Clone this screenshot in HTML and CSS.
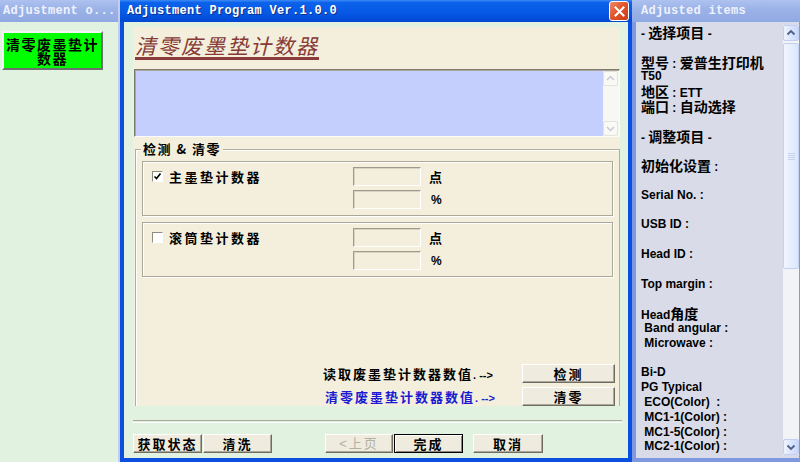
FILE: index.html
```html
<!DOCTYPE html>
<html lang="zh-CN">

<head>
    <meta charset="UTF-8">
    <title>Adjustment Program Ver.1.0.0</title>
    <link rel="stylesheet" href="styles.css">
</head>

<body>
    <div class="left-win">
        <div class="caption caption-off">Adjustment o...</div>
        <div class="left-body">
            <button class="menu-btn">清零废墨垫计数器</button>
        </div>
    </div>

    <div class="main-win">
        <div class="caption caption-on">
            <span class="caption-text">Adjustment Program Ver.1.0.0</span>
            <button class="close-btn">
                <svg width="17" height="17" viewBox="0 0 17 17">
                    <path d="M4.5 4.5 L12.5 12.5 M12.5 4.5 L4.5 12.5" stroke="#fff" stroke-width="2" stroke-linecap="square" fill="none" />
                </svg>
            </button>
        </div>
        <div class="main-body">
            <div class="panel">
                <div class="heading"><span>清零废墨垫计数器</span></div>
                <div class="memo">
                    <div class="memo-text"></div>
                    <div class="memo-scroll">
                        <span class="arrow-box"><svg width="13" height="13" viewBox="0 0 13 13"><polyline points="3,8 6.5,4.5 10,8" stroke="#c9cbd2" stroke-width="1.5" fill="none" /></svg></span>
                        <span class="arrow-box"><svg width="13" height="13" viewBox="0 0 13 13"><polyline points="3,5 6.5,8.5 10,5" stroke="#c9cbd2" stroke-width="1.5" fill="none" /></svg></span>
                    </div>
                </div>

                <div class="group">
                    <div class="group-title">检测 &amp; 清零</div>

                    <div class="counter-box">
                        <label class="check">
                            <span class="check-box"><svg width="9" height="9" viewBox="0 0 9 9"><polyline points="1.5,4.5 3.5,6.5 7.5,1.5" stroke="#000" stroke-width="1.6" fill="none" /></svg></span>
                            主墨垫计数器
                        </label>
                        <span class="field"></span><span class="unit">点</span>
                        <span class="field field-2"></span><span class="unit unit-2">%</span>
                    </div>

                    <div class="counter-box second">
                        <label class="check">
                            <span class="check-box"></span>
                            滚筒垫计数器
                        </label>
                        <span class="field"></span><span class="unit">点</span>
                        <span class="field field-2"></span><span class="unit unit-2">%</span>
                    </div>

                    <div class="actions">
                        <span class="hint">读取废墨垫计数器数值<span class="arrow-txt">. --&gt;</span></span>
                        <button class="btn">检测</button>
                        <span class="hint hint-blue">清零废墨垫计数器数值<span class="arrow-txt">. --&gt;</span></span>
                        <button class="btn">清零</button>
                    </div>
                </div>
            </div>

            <div class="separator"></div>

            <div class="footer">
                <button class="btn foot-btn">获取状态</button>
                <button class="btn foot-btn">清洗</button>
                <button class="btn foot-btn disabled prev">&lt;上页</button>
                <button class="btn foot-btn default">完成</button>
                <button class="btn foot-btn cancel">取消</button>
            </div>
        </div>
    </div>

    <div class="right-win">
        <div class="caption caption-off">Adjusted items</div>
        <div class="right-body">
            <div class="items">
                <div>- <span class="cn">选择项目</span> -</div>
                <div class="sp"><span class="cn">型号</span> : <span class="cn">爱普生打印机</span></div>
                <div>T50</div>
                <div><span class="cn">地区</span> : ETT</div>
                <div><span class="cn">端口</span> : <span class="cn">自动选择</span></div>
                <div class="sp">- <span class="cn">调整项目</span> -</div>
                <div class="sp"><span class="cn">初始化设置</span> :</div>
                <div class="sp">Serial No. :</div>
                <div class="sp">USB ID :</div>
                <div class="sp">Head ID :</div>
                <div class="sp">Top margin :</div>
                <div class="sp">Head<span class="cn">角度</span></div>
                <div> Band angular :</div>
                <div> Microwave :</div>
                <div class="sp">Bi-D</div>
                <div>PG Typical</div>
                <div> ECO(Color)  :</div>
                <div> MC1-1(Color) :</div>
                <div> MC1-5(Color) :</div>
                <div> MC2-1(Color) :</div>
            </div>
            <div class="vscroll">
                <span class="sc-arrow"><svg width="14" height="14" viewBox="0 0 14 14"><polyline points="3.5,8.5 7,5 10.5,8.5" stroke="#4d6185" stroke-width="1.8" fill="none" /></svg></span>
                <span class="sc-thumb"><span class="grip"></span></span>
                <span class="sc-track"></span>
                <span class="sc-arrow"><svg width="14" height="14" viewBox="0 0 14 14"><polyline points="3.5,5.5 7,9 10.5,5.5" stroke="#4d6185" stroke-width="1.8" fill="none" /></svg></span>
            </div>
        </div>
    </div>
</body>

</html>
```

FILE: styles.css
```css
body {
    margin: 0;
    width: 800px;
    height: 462px;
    overflow: hidden;
    display: flex;
    font-family: "Liberation Sans", "Noto Sans CJK SC", sans-serif;
    font-size: 12px;
    color: #000;
    background-color: #e1f2e1;
}

button {
    font-family: inherit;
    cursor: default;
}

/* title bars */
.caption {
    height: 22px;
    box-sizing: border-box;
    display: flex;
    align-items: center;
    font-family: "Liberation Mono", monospace;
    font-weight: bold;
    font-size: 12px;
    letter-spacing: 0.3px;
    white-space: nowrap;
    overflow: hidden;
}

.caption-off {
    background: linear-gradient(to bottom, #aec2f0 0%, #9cb3e8 40%, #91a9e2 100%);
    color: #eef2fc;
}

.caption-on {
    background: linear-gradient(to bottom, #3d8af7 0%, #0b62ea 12%, #0658e5 60%, #0048d2 100%);
    color: #fff;
    padding-left: 7px;
    text-shadow: 1px 1px 0 #0a2f8c;
}

/* left window */
.left-win {
    width: 118px;
    border-right: 2px solid #c3ceef;
    display: flex;
    flex-direction: column;
}

.left-win .caption {
    padding-left: 3px;
}

.left-body {
    flex: 1;
    background-color: #e1f2e1;
    padding: 9px 0 0 2px;
}

.menu-btn {
    width: 101px;
    height: 39px;
    padding: 0;
    background-color: #00ff00;
    border: 2px solid;
    border-color: #f4f4f4 #6f6f6f #6f6f6f #f4f4f4;
    font-family: "Noto Sans CJK SC", sans-serif;
    font-weight: bold;
    font-size: 14px;
    line-height: 14px;
    letter-spacing: 1.5px;
    color: #000;
}

/* main window */
.main-win {
    width: 512px;
    display: flex;
    flex-direction: column;
    background-color: #0b4fe0;
}

.close-btn {
    margin-left: auto;
    margin-right: 3px;
    width: 20px;
    height: 20px;
    padding: 0;
    border: 1px solid #fff;
    border-radius: 3px;
    background: linear-gradient(135deg, #ee8c6a 0%, #e1572d 45%, #c93c14 100%);
    display: flex;
    align-items: center;
    justify-content: center;
}

.main-body {
    flex: 1;
    margin: 0 4px 4px 4px;
    background-color: #e1f2e1;
    padding: 5px 0 0 9px;
    display: flex;
    flex-direction: column;
}

.panel {
    width: 487px;
    height: 379px;
    background-color: #f3efdc;
    display: flex;
    flex-direction: column;
}

.heading {
    height: 42px;
    box-sizing: border-box;
    padding: 6px 0 0 2px;
}

.heading span {
    display: inline-block;
    font-family: "Noto Sans CJK SC", sans-serif;
    font-style: italic;
    font-size: 21px;
    line-height: 24px;
    letter-spacing: 2px;
    color: #873a36;
    border-bottom: 3px solid #8c3a3a;
}

.memo {
    height: 68px;
    margin-left: 1px;
    box-sizing: border-box;
    border: 1px solid;
    border-color: #7d7b70 #fbfbf8 #fbfbf8 #7d7b70;
    box-shadow: inset 1px 1px 0 #a9a699;
    display: flex;
}

.memo-text {
    flex: 1;
    background-color: #c5cffd;
    margin: 1px 0 0 1px;
}

.memo-scroll {
    width: 16px;
    background-color: #f7f7f3;
    margin-top: 1px;
    display: flex;
    flex-direction: column;
    justify-content: space-between;
}

.arrow-box {
    width: 15px;
    height: 15px;
    box-sizing: border-box;
    border: 1px solid #e3e3dc;
    border-radius: 2px;
    background-color: #f9f9f6;
    display: flex;
    align-items: center;
    justify-content: center;
}

/* group box */
.group {
    flex: 1;
    margin: 12px 0 0 2px;
    border: 1px solid #b2ae9e;
    border-bottom: none;
    box-shadow: inset 1px 1px 0 #fff;
    padding: 0 6px;
    display: flex;
    flex-direction: column;
}

.group-title {
    width: fit-content;
    margin: -8px 0 0 -1px;
    padding: 0 2px;
    background-color: #f3efdc;
    font-family: "Noto Sans CJK SC", sans-serif;
    font-weight: bold;
    font-size: 13px;
    line-height: 14px;
    letter-spacing: 1.5px;
}

.counter-box {
    margin-top: 5px;
    height: 55px;
    box-sizing: border-box;
    border: 1px solid #aca899;
    box-shadow: inset 1px 1px 0 #fff, 1px 1px 0 #fff;
    padding: 5px 0 0 9px;
    display: grid;
    grid-template-columns: 193px 68px auto;
    grid-template-rows: 19px 19px;
    row-gap: 4px;
    column-gap: 8px;
    align-items: center;
}

.counter-box.second {
    margin-top: 6px;
}

.check {
    display: flex;
    align-items: center;
    gap: 6px;
    font-family: "Noto Sans CJK SC", sans-serif;
    font-weight: bold;
    font-size: 13px;
    letter-spacing: 2.5px;
    white-space: nowrap;
}

.check-box {
    width: 11px;
    height: 11px;
    box-sizing: border-box;
    border: 1px solid;
    border-color: #8d8b80 #fff #fff #8d8b80;
    background-color: #fff;
    display: flex;
    align-items: center;
    justify-content: center;
}

.field {
    height: 19px;
    box-sizing: border-box;
    border: 1px solid;
    border-color: #9e9b8d #fff #fff #9e9b8d;
    box-shadow: inset 1px 1px 0 #d8d4c4;
    background-color: #f3efdc;
}

.field-2 {
    grid-column: 2;
    grid-row: 2;
}

.unit {
    font-family: "Noto Sans CJK SC", sans-serif;
    font-weight: bold;
    font-size: 13px;
}

.unit-2 {
    grid-column: 3;
    grid-row: 2;
    padding-left: 2px;
    font-family: "Liberation Sans", sans-serif;
    font-size: 12px;
}

.actions {
    margin-top: auto;
    margin-left: 181px;
    display: grid;
    grid-template-columns: 199px 93px;
    grid-template-rows: 19px 19px;
    row-gap: 4px;
    align-items: center;
}

.hint {
    font-family: "Noto Sans CJK SC", sans-serif;
    font-weight: bold;
    font-size: 13px;
    letter-spacing: 2px;
    white-space: nowrap;
}

.hint-blue {
    color: #1a1ad2;
    padding-left: 2px;
}

.arrow-txt {
    font-family: "Liberation Sans", sans-serif;
    font-size: 11px;
    letter-spacing: 0;
}

.btn {
    height: 19px;
    box-sizing: border-box;
    padding: 0;
    border: 1px solid;
    border-color: #fff #6f6d62 #6f6d62 #fff;
    box-shadow: inset -1px -1px 0 #aca899;
    background-color: #efebde;
    font-family: "Noto Sans CJK SC", sans-serif;
    font-weight: bold;
    font-size: 13px;
    line-height: 16px;
    letter-spacing: 2px;
    color: #000;
}

.separator {
    margin: 14px 6px 0 0;
    height: 1px;
    border-top: 1px solid #aca899;
    border-bottom: 1px solid #fff;
}

.footer {
    margin-top: 11px;
    display: flex;
    gap: 1px;
}

.foot-btn {
    width: 69px;
}

.foot-btn.prev {
    margin-left: 52px;
    width: 68px;
}

.foot-btn.disabled {
    color: #b3b0a2;
    font-weight: normal;
    font-family: "Liberation Sans", "Noto Sans CJK SC", sans-serif;
}

.foot-btn.default {
    border: 1px solid #000;
    box-shadow: inset 1px 1px 0 #fff, inset -1px -1px 0 #8a877a;
}

.foot-btn.cancel {
    margin-left: 9px;
    width: 70px;
}

/* right window */
.right-win {
    width: 168px;
    display: flex;
    flex-direction: column;
    background-color: #7f98e0;
}

.right-win .caption {
    padding-left: 9px;
}

.right-body {
    flex: 1;
    margin: 0 1px 4px 4px;
    background-color: #d9dce8;
    display: flex;
}

.items {
    flex: 1;
    padding: 3px 0 0 5px;
    font-weight: bold;
    font-size: 12px;
}

.items div {
    height: 14.8px;
    line-height: 14.8px;
    white-space: pre;
}

.items .sp {
    margin-top: 14.8px;
}

.cn {
    font-family: "Noto Sans CJK SC", sans-serif;
    font-size: 14px;
    line-height: 14.8px;
}

.vscroll {
    width: 16px;
    margin: 3px 0 3px 0;
    background-color: #f2f3f6;
    display: flex;
    flex-direction: column;
}

.sc-arrow {
    height: 16px;
    box-sizing: border-box;
    border: 1px solid #c3cff0;
    border-radius: 2px;
    background: linear-gradient(to right, #eef3ff, #c9d7fa);
    display: flex;
    align-items: center;
    justify-content: center;
}

.sc-thumb {
    height: 226px;
    margin-top: 2px;
    box-sizing: border-box;
    border: 1px solid #c4d1f2;
    border-radius: 2px;
    background: linear-gradient(to right, #f1f5ff, #dce6fc);
    display: flex;
    align-items: center;
    justify-content: center;
}

.grip {
    width: 7px;
    height: 7px;
    background: repeating-linear-gradient(to bottom, #c6d2ee 0 1px, transparent 1px 2px);
}

.sc-track {
    flex: 1;
}
```
